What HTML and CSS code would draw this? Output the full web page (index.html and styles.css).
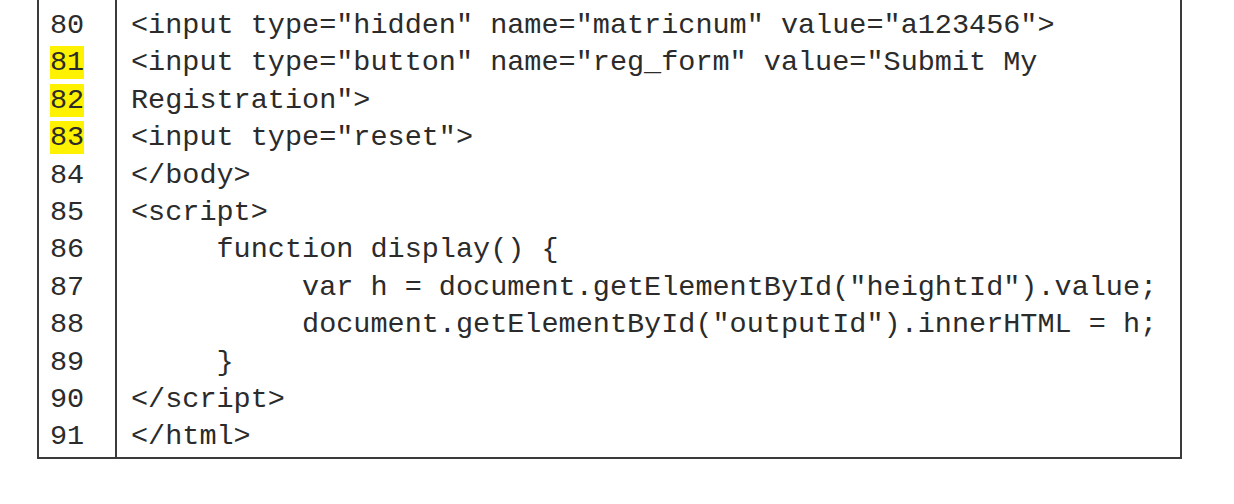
FILE: index.html
```html
<!DOCTYPE html>
<html lang="en">
<head>
<meta charset="utf-8">
<title>Code listing</title>
<link rel="stylesheet" href="styles.css">
</head>
<body>
<div class="listing">
  <div class="gutter">
    <div class="ln">80</div>
    <div class="ln"><span class="mark">81</span></div>
    <div class="ln"><span class="mark">82</span></div>
    <div class="ln"><span class="mark">83</span></div>
    <div class="ln">84</div>
    <div class="ln">85</div>
    <div class="ln">86</div>
    <div class="ln">87</div>
    <div class="ln">88</div>
    <div class="ln">89</div>
    <div class="ln">90</div>
    <div class="ln">91</div>
  </div>
  <div class="code">
    <div class="line">&lt;input type="hidden" name="matricnum" value="a123456"&gt;</div>
    <div class="line">&lt;input type="button" name="reg_form" value="Submit My</div>
    <div class="line">Registration"&gt;</div>
    <div class="line">&lt;input type="reset"&gt;</div>
    <div class="line">&lt;/body&gt;</div>
    <div class="line">&lt;script&gt;</div>
    <div class="line">     function display() {</div>
    <div class="line">          var h = document.getElementById("heightId").value;</div>
    <div class="line">          document.getElementById("outputId").innerHTML = h;</div>
    <div class="line">     }</div>
    <div class="line">&lt;/script&gt;</div>
    <div class="line">&lt;/html&gt;</div>
  </div>
</div>
</body>
</html>
```
FILE: styles.css
```css
html, body {
  margin: 0;
  padding: 0;
  background: #ffffff;
}

.listing {
  display: grid;
  grid-template-columns: 78px 1fr;
  width: 1145px;
  margin-left: 37px;
  box-sizing: border-box;
  border: 2px solid #3a3a3a;
  border-top: none;
  font-family: "Courier New", "Nimbus Mono PS", "FreeMono", "Liberation Mono", monospace;
  font-size: 28.5px;
  line-height: 37.4px;
  color: #2b2b2b;
}

.gutter {
  border-right: 2px solid #3a3a3a;
  padding-left: 11px;
  padding-top: 7px;
  padding-bottom: 1px;
}

.code {
  padding-left: 14px;
  padding-top: 7px;
}

.line,
.ln {
  white-space: pre;
  height: 37.4px;
}

.mark {
  background: #fff200;
}
```
